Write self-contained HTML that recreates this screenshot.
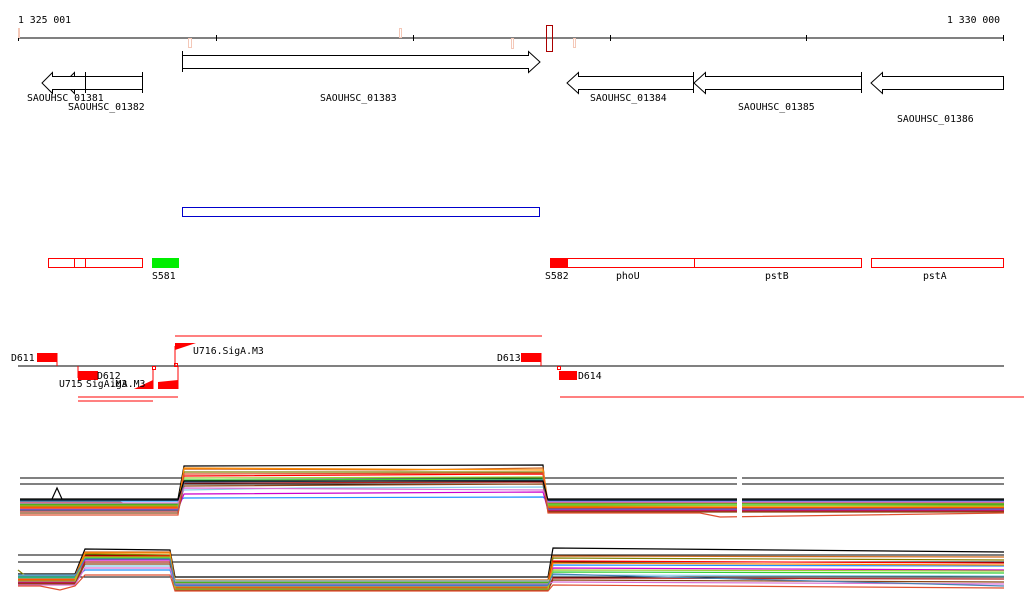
<!DOCTYPE html>
<html><head><meta charset="utf-8"><style>
html,body{margin:0;padding:0;background:#fff;width:1024px;height:611px;overflow:hidden}
svg{display:block}
text{font-family:"DejaVu Sans Mono","Liberation Mono",monospace;font-size:9.8px;fill:#000}
</style></head><body>
<svg width="1024" height="611" viewBox="0 0 1024 611" xmlns="http://www.w3.org/2000/svg">
<text x="18" y="23">1 325 001</text>
<text x="947" y="23">1 330 000</text>
<line x1="18" y1="38" x2="1004" y2="38" stroke="#000"/>
<g stroke="#000"><line x1="18.5" y1="36" x2="18.5" y2="41"/><line x1="216.5" y1="35" x2="216.5" y2="41"/><line x1="413.5" y1="35" x2="413.5" y2="41"/><line x1="610.5" y1="35" x2="610.5" y2="41"/><line x1="806.5" y1="35" x2="806.5" y2="41"/><line x1="1003.5" y1="35" x2="1003.5" y2="41"/></g>
<g fill="none" stroke="#f4c8b8"><rect x="18.5" y="28.5" width="1" height="9"/><rect x="188.5" y="38.5" width="3" height="9"/><rect x="399.5" y="28.5" width="2" height="9"/><rect x="511.5" y="38.5" width="2" height="10"/><rect x="573.5" y="38.5" width="2" height="9"/></g>
<rect x="546.5" y="25.5" width="6" height="26" fill="none" stroke="#a00"/>
<g fill="#fff" stroke="#000">
<path d="M182.5 55.5 H528.5 V51.5 L540 62 L528.5 72.5 V68.5 H182.5 Z"/>
<line x1="182.5" y1="51" x2="182.5" y2="72"/>
<path d="M142.5 76.5 H74.5 V72.5 L64 83 L74.5 93.5 V89.5 H142.5 Z"/>
<path d="M85.5 76.5 H52.5 V72.5 L42 83 L52.5 93.5 V89.5 H85.5"/>
<line x1="142.5" y1="72" x2="142.5" y2="93"/><line x1="85.5" y1="72" x2="85.5" y2="93"/>
<path d="M693.5 76.5 H578.5 V72.5 L567 83 L578.5 93.5 V89.5 H693.5"/>
<path d="M861.5 76.5 H705.5 V72.5 L694 83 L705.5 93.5 V89.5 H861.5"/>
<line x1="693.5" y1="72" x2="693.5" y2="93"/><line x1="861.5" y1="72" x2="861.5" y2="93"/>
<path d="M1003.5 76.5 H882.5 V72.5 L871 83 L882.5 93.5 V89.5 H1003.5 Z"/>
</g>
<text x="27" y="101">SAOUHSC_01381</text>
<text x="68" y="110">SAOUHSC_01382</text>
<text x="320" y="101">SAOUHSC_01383</text>
<text x="590" y="101">SAOUHSC_01384</text>
<text x="738" y="110">SAOUHSC_01385</text>
<text x="897" y="122">SAOUHSC_01386</text>
<rect x="182.5" y="207.5" width="357" height="9" fill="none" stroke="#00c"/>
<g fill="none" stroke="#f00"><rect x="48.5" y="258.5" width="94" height="9"/><line x1="74.5" y1="258" x2="74.5" y2="268"/><line x1="85.5" y1="258" x2="85.5" y2="268"/>
<rect x="550.5" y="258.5" width="311" height="9"/><line x1="694.5" y1="258" x2="694.5" y2="268"/><rect x="871.5" y="258.5" width="132" height="9"/></g>
<rect x="152" y="258" width="27" height="10" fill="#0e0"/>
<rect x="550" y="258" width="18" height="10" fill="#f00"/>
<text x="152" y="279">S581</text><text x="545" y="279">S582</text>
<text x="616" y="279">phoU</text><text x="765" y="279">pstB</text><text x="923" y="279">pstA</text>
<line x1="18" y1="366" x2="1004" y2="366" stroke="#000"/>
<g stroke="#f00" fill="none">
<line x1="175" y1="336" x2="542" y2="336"/>
<line x1="78" y1="397" x2="178" y2="397"/><line x1="78" y1="401" x2="153" y2="401"/>
<line x1="560" y1="397" x2="1024" y2="397"/>
<polyline points="57,353 57,366"/><polyline points="541,353 541,366"/>
<polyline points="78,366 78,378"/>
<polyline points="178,366 178,389"/><polyline points="175,366 175,346"/>
<rect x="152.5" y="366.5" width="3" height="3"/>
<rect x="174.5" y="363.5" width="3" height="3"/><rect x="557.5" y="366.5" width="3" height="3"/>
<line x1="153" y1="369" x2="153" y2="389"/>
</g>
<g fill="#f00">
<rect x="37" y="353" width="20" height="9"/><rect x="521" y="353" width="20" height="9"/>
<rect x="78" y="371" width="20" height="9"/><rect x="559" y="371" width="18" height="9"/>
<polygon points="175,343 196,343 175,350"/>
<polygon points="158,382 178,380 178,389 158,389"/>
<polygon points="134,389 153,380 153,389"/>
</g>
<text x="11" y="361">D611</text><text x="497" y="361">D613</text>
<text x="97" y="379">D612</text><text x="578" y="379">D614</text>
<text x="59" y="387">U715</text><text x="86" y="387">SigA.M3</text><text x="110" y="387">igA.M3</text>
<text x="193" y="354">U716.SigA.M3</text>
<g stroke="#000"><line x1="20" y1="478" x2="737" y2="478"/><line x1="742" y1="478" x2="1004" y2="478"/><line x1="20" y1="484" x2="737" y2="484"/><line x1="742" y1="484" x2="1004" y2="484"/></g>
<g fill="none" stroke-width="1.2">
<polyline stroke="#000" points="20,499 178,499 184,466 543,465 546,499 1004,499"/>
<polyline stroke="#000" points="52,499 57,488 62,499"/>
<polyline stroke="#d2691e" points="20,502 120,502 130,506 178,506 184,469 400,470 543,468 548,503 1004,503"/>
<polyline stroke="#808000" points="20,505 178,505 184,472 543,472 548,506 1004,505"/>
<polyline stroke="#f00" points="20,507 178,507 184,476 543,474 548,508 1004,508"/>
<polyline stroke="#1e90ff" points="20,501 178,501 184,498 543,497 548,501 1004,501"/>
<polyline stroke="#c0c" points="20,509 178,509 184,494 543,492 548,510 1004,510"/>
<polyline stroke="#32cd32" points="20,504 178,504 184,480 543,479 548,504 1004,504"/>
<polyline stroke="#87ceeb" points="20,500 178,500 184,490 300,488 543,487 548,500 1004,500"/>
<polyline stroke="#b22222" points="20,511 178,511 184,483 543,482 548,511 1004,511"/>
<polyline stroke="#8b4513" points="20,513 178,513 184,486 543,484 548,512 1004,512"/>
<polyline stroke="#ff8c00" points="20,508 178,508 184,468 543,470 548,507 1004,507"/>
<polyline stroke="#9acd32" points="20,506 178,506 184,478 543,477 548,505 1004,506"/>
<polyline stroke="#da70d6" points="20,503 178,503 184,488 543,490 548,502 1004,502"/>
<polyline stroke="#4682b4" points="20,510 178,510 184,482 543,480 548,509 1004,509"/>
<polyline stroke="#e05030" points="20,515 178,515 184,474 543,473 548,513 700,513 720,517 1004,513"/>
<polyline stroke="#000" points="20,500 178,500 184,481 543,481 548,500 1004,500"/>
</g>
<rect x="737" y="470" width="5" height="50" fill="#fff"/>
<g stroke="#000"><line x1="18" y1="555" x2="1004" y2="555"/><line x1="18" y1="562" x2="1004" y2="562"/><line x1="18" y1="577" x2="1004" y2="577"/></g>
<g fill="none" stroke-width="1.2">
<polyline stroke="#000" points="18,574 75,574 85,549 170,550 175,577 548,577 553,548 1004,552"/>
<polyline stroke="#d2691e" points="18,576 75,576 85,552 170,552 175,580 548,580 553,556 1004,557"/>
<polyline stroke="#808000" points="18,570 28,578 75,578 85,554 170,555 175,582 548,582 553,558 1004,560"/>
<polyline stroke="#f00" points="18,580 75,580 85,556 170,556 175,584 548,584 553,561 1004,563"/>
<polyline stroke="#1e90ff" points="18,578 75,578 85,570 170,570 175,586 548,586 553,565 1004,566"/>
<polyline stroke="#c0c" points="18,582 75,582 85,560 170,560 175,585 548,585 553,568 1004,570"/>
<polyline stroke="#32cd32" points="18,577 75,577 85,558 170,558 175,583 548,583 553,572 1004,573"/>
<polyline stroke="#87ceeb" points="18,575 75,575 85,566 170,566 175,581 548,581 553,575 1004,576"/>
<polyline stroke="#b22222" points="18,583 75,583 85,562 170,562 175,588 548,588 553,578 1004,579"/>
<polyline stroke="#8b4513" points="18,584 75,584 85,564 170,564 175,590 548,590 553,580 1004,582"/>
<polyline stroke="#ff8c00" points="18,579 75,579 85,553 170,553 175,587 548,587 553,563 1004,565"/>
<polyline stroke="#9acd32" points="18,581 75,581 85,557 170,557 175,589 548,589 553,570 1004,571"/>
<polyline stroke="#da70d6" points="18,585 75,585 85,568 170,568 175,584 548,584 553,582 1004,584"/>
<polyline stroke="#4682b4" points="18,576 75,576 85,559 170,559 175,585 548,585 553,574 1004,586"/>
<polyline stroke="#e05030" points="18,586 40,586 60,590 75,586 85,575 170,575 175,591 548,591 553,585 1004,588"/>
</g>
</svg>
</body></html>
